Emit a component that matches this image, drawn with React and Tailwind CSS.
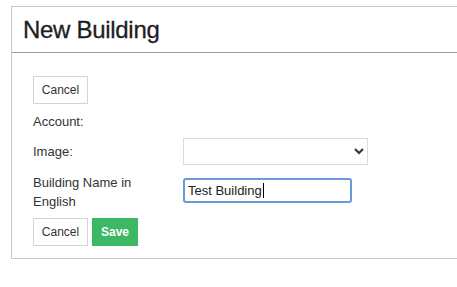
// New Building form
export default function App() {
  return (
    <div className="w-[457px] h-[287px] overflow-hidden bg-white font-['Liberation_Sans',Arial,sans-serif] text-[#333]">
      <div className="ml-[11px] mt-[6px] w-[460px] border border-r-0 border-[#c8c8c8]">
        {/* Header */}
        <div className="h-[46px] flex items-center pl-[11px] border-b border-[#9a9a9a]">
          <h1 className="text-[24px] leading-[28px] text-[#1e1e1e] tracking-[-0.3px] [-webkit-text-stroke:0.3px_#1e1e1e]">New Building</h1>
        </div>

        {/* Body */}
        <div className="pl-[21px] pt-[23px] pb-[12px] text-[13px]">
          <button className="h-[28px] w-[55px] border border-[#d4d4d4] bg-white text-[12px] text-[#333]">
            Cancel
          </button>

          <div className="mt-[9px] h-[18px] leading-[18px]">Account:</div>

          <div className="mt-[7px] grid grid-cols-[150px_1fr] items-center">
            <label className="leading-[18px]">Image:</label>
            <select className="h-[27px] w-[185px] border border-[#dcdcdc] bg-white text-[13px]">
              <option></option>
            </select>
          </div>

          <div className="mt-[8px] grid grid-cols-[150px_1fr] items-start">
            <label className="leading-[19px] w-[120px]">Building Name in English</label>
            <div className="mt-[5px] h-[25px] w-[169px] border-2 border-[#6a98d8] rounded-[3px] flex items-center pl-[3px] text-[13px] text-[#222]">
              <span>Test Building</span>
              <span className="ml-[1px] w-[1px] h-[15px] bg-black" />
            </div>
          </div>

          <div className="mt-[7px] flex gap-[4px]">
            <button className="h-[28px] w-[55px] border border-[#d4d4d4] bg-white text-[12px] text-[#333]">
              Cancel
            </button>
            <button className="h-[28px] w-[46px] bg-[#3cb764] text-[12px] font-bold text-white">
              Save
            </button>
          </div>
        </div>
      </div>
    </div>
  );
}
